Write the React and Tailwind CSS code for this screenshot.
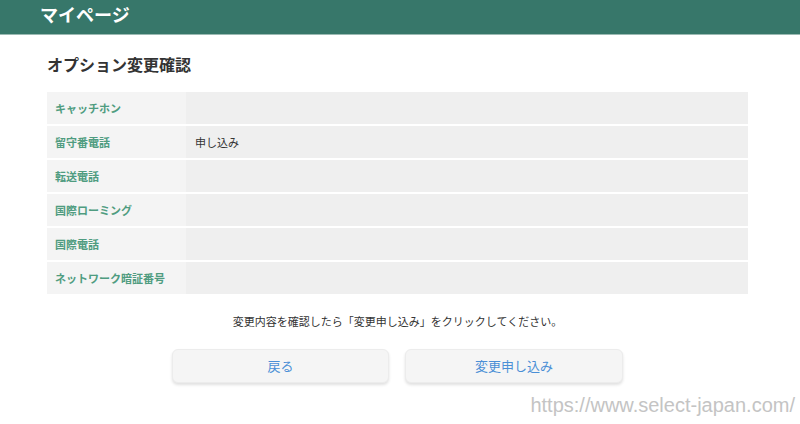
const font = { fontFamily: '"Noto Sans CJK JP", "Noto Sans", sans-serif' }

const rows = [
  { label: 'キャッチホン', value: '' },
  { label: '留守番電話', value: '申し込み' },
  { label: '転送電話', value: '' },
  { label: '国際ローミング', value: '' },
  { label: '国際電話', value: '' },
  { label: 'ネットワーク暗証番号', value: '' },
]

export default function App() {
  return (
    <div className="w-[800px] h-[424px] bg-white overflow-hidden flex flex-col" style={font}>
      <header className="h-[35px] bg-[#37776a] flex items-center px-[40px] border-b border-[#9bbab3]">
        <span className="text-white font-bold text-[18px] leading-none -mt-[6px]">マイページ</span>
      </header>

      <main className="px-[47px] pr-[52px] flex flex-col">
        <h1 className="mt-[18px] h-[22px] text-[16px] font-bold text-[#333] leading-[22px]">オプション変更確認</h1>

        <div className="mt-[17px] flex flex-col gap-[2px]">
          {rows.map(r => (
            <div key={r.label} className="flex h-[32px]">
              <div className="w-[139px] bg-[#f4f4f4] flex items-center px-[8px] text-[11px] font-bold text-[#4f9c80]">
                {r.label}
              </div>
              <div className="flex-1 bg-[#efefef] flex items-center px-[9px] text-[11px] text-[#333]">
                {r.value}
              </div>
            </div>
          ))}
        </div>

        <p className="mt-[19px] text-center text-[11px] text-[#333] leading-[16px]">
          変更内容を確認したら「変更申し込み」をクリックしてください。
        </p>

        <div className="mt-[20px] flex justify-center gap-[16px]">
          <button className="w-[217px] h-[34px] rounded-[6px] bg-[#f5f5f5] border border-[#ececec] shadow-[0_2px_3px_rgba(0,0,0,0.12)] text-[13px] text-[#4a8fd6]">
            戻る
          </button>
          <button className="w-[218px] h-[34px] rounded-[6px] bg-[#f5f5f5] border border-[#ececec] shadow-[0_2px_3px_rgba(0,0,0,0.12)] text-[13px] text-[#4a8fd6]">
            変更申し込み
          </button>
        </div>

        <div className="mt-[9px] flex justify-end -mr-[52px] pr-[5px]">
          <span className="text-[20px] text-[#c4c4c4] leading-[26px]" style={{ fontFamily: '"Liberation Sans", Arial, sans-serif' }}>
            https://www.select-japan.com/
          </span>
        </div>
      </main>
    </div>
  )
}
